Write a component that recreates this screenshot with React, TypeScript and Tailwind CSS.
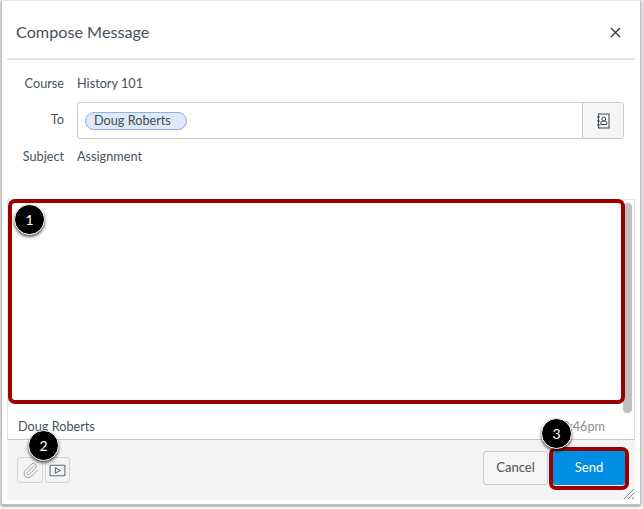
import React from "react";
import { Paperclip } from "lucide-react";

function Badge({ n, className }: { n: number; className: string }) {
  return (
    <div className={`absolute w-[31px] h-[31px] rounded-full bg-black border border-white text-white text-[14px] flex items-center justify-center shadow-[0_2px_3px_rgba(0,0,0,0.6)] ${className}`}>
      {n}
    </div>
  );
}

export default function App() {
  return (
    <div className="relative w-[643px] h-[509px] bg-white overflow-hidden font-['Lato',sans-serif] text-[#46525c] text-[12.7px]">
      <div className="relative ml-[1px] w-[640px] h-[505px] bg-white border border-[#c4c4c4] border-t-[#e8e8e8] shadow-[0_1px_3px_rgba(0,0,0,0.5)] flex flex-col px-[5px]">
        <div className="h-[59px] shrink-0 border-b-2 border-[#e2e4e5] flex items-center justify-between pl-[9px] pr-[12px] pt-[6px]">
          <span className="text-[16.200px] text-[#45525c]">Compose Message</span>
          <svg width="11" height="11" viewBox="0 0 11 11" className="mr-[2px]">
            <path d="M1 1 L10 10 M10 1 L1 10" stroke="#2d3b45" strokeWidth="1.4" fill="none" />
          </svg>
        </div>
        <div className="h-[139px] shrink-0 flex flex-col pt-[15px]">
          <div className="flex items-center h-[18px]">
            <span className="w-[57px] text-right">Course</span>
            <span className="ml-[13px]">History 101</span>
          </div>
          <div className="flex items-center mt-[9px] h-[37px]">
            <span className="w-[57px] text-right -mt-[2px]">To</span>
            <div className="ml-[13px] w-[547px] h-[37px] flex border border-[#c8cccf] rounded-[3px] bg-white">
              <div className="flex-1 flex items-center pl-[7px]">
                <span className="h-[18px] w-[102px] pl-[8px] flex items-center rounded-full bg-[#dfe8f7] border border-[#8fb0e0] text-[#3f4c57]">Doug Roberts</span>
              </div>
              <div className="w-[41px] border-l border-[#c8cccf] bg-[#f5f5f5] rounded-r-[3px] flex items-center justify-center">
                <svg width="14" height="16" viewBox="0 0 14 16" fill="none" stroke="#3b4a55" strokeWidth="1">
                  <rect x="2.500" y="1" width="10.500" height="14" />
                  <path d="M1 4h3M1 8h3M1 12h3" />
                  <circle cx="7.800" cy="6" r="1.900" />
                  <path d="M4.800 11.500v-1.800a1.500 1.500 0 0 1 1.500-1.500h3a1.500 1.500 0 0 1 1.500 1.500v1.800z" />
                </svg>
              </div>
            </div>
          </div>
          <div className="flex items-center mt-[9px] h-[18px]">
            <span className="w-[57px] text-right">Subject</span>
            <span className="ml-[13px]">Assignment</span>
          </div>
        </div>
        <div className="flex-1 border border-[#e4e4e4] border-b-0 relative min-h-0">
          <div className="absolute left-[10px] top-[217px] text-[#46525c]">Doug Roberts</div>
          <div className="absolute right-[29px] top-[217px] text-[#8a9095]">3:46pm</div>
          <div className="absolute right-[2px] top-[3px] w-[9px] h-[210px] rounded-[4px] bg-[#c1c1c1]" />
        </div>
        <div className="h-[61px] shrink-0 bg-[#f4f4f4] border-t border-[#c9c9c9] flex items-start justify-between pl-[10px] pr-[10px] pt-[11px]">
          <div className="flex gap-[2px] mt-[6px]">
            <div className="w-[26px] h-[26px] border border-[#d5d5d5] rounded-[3px] flex items-center justify-center">
              <Paperclip size={17} strokeWidth={1.2} color="#8a9199" />
            </div>
            <div className="w-[25px] h-[26px] border border-[#d5d5d5] rounded-[3px] flex items-center justify-center">
              <svg width="17" height="15" viewBox="0 0 16 14" fill="none" stroke="#5d6872" strokeWidth="1">
                <rect x="1" y="2" width="14" height="10" rx="1" />
                <path d="M6 4.500v5l4.500-2.500z" />
              </svg>
            </div>
          </div>
          <div className="flex gap-[5px]">
            <button className="w-[65px] h-[34px] bg-[#f5f5f5] border border-[#c7cdd1] rounded-[3px] text-[#46525c] text-[13px]">Cancel</button>
            <button className="w-[72px] h-[34px] bg-[#008ee2] rounded-[3px] text-white text-[13px]">Send</button>
          </div>
        </div>
        <div className="h-[4px] shrink-0" />
      </div>

      <div className="absolute left-[8px] top-[199px] w-[617px] h-[205px] border-[4px] border-[#9b0000] rounded-[7px]" />
      <div className="absolute left-[549px] top-[447px] w-[80px] h-[43px] border-[4px] border-[#9b0000] rounded-[7px]" />
      <Badge n={1} className="left-[14px] top-[204px]" />
      <Badge n={2} className="left-[28px] top-[430px]" />
      <Badge n={3} className="left-[541px] top-[418px]" />
      <svg width="12" height="12" viewBox="0 0 12 12" className="absolute left-[623px] top-[488px]" stroke="#8a8a8a" strokeWidth="1">
        <path d="M1 11 11 1M5 11l6-6M9 11l2-2" />
      </svg>
    </div>
  );
}
